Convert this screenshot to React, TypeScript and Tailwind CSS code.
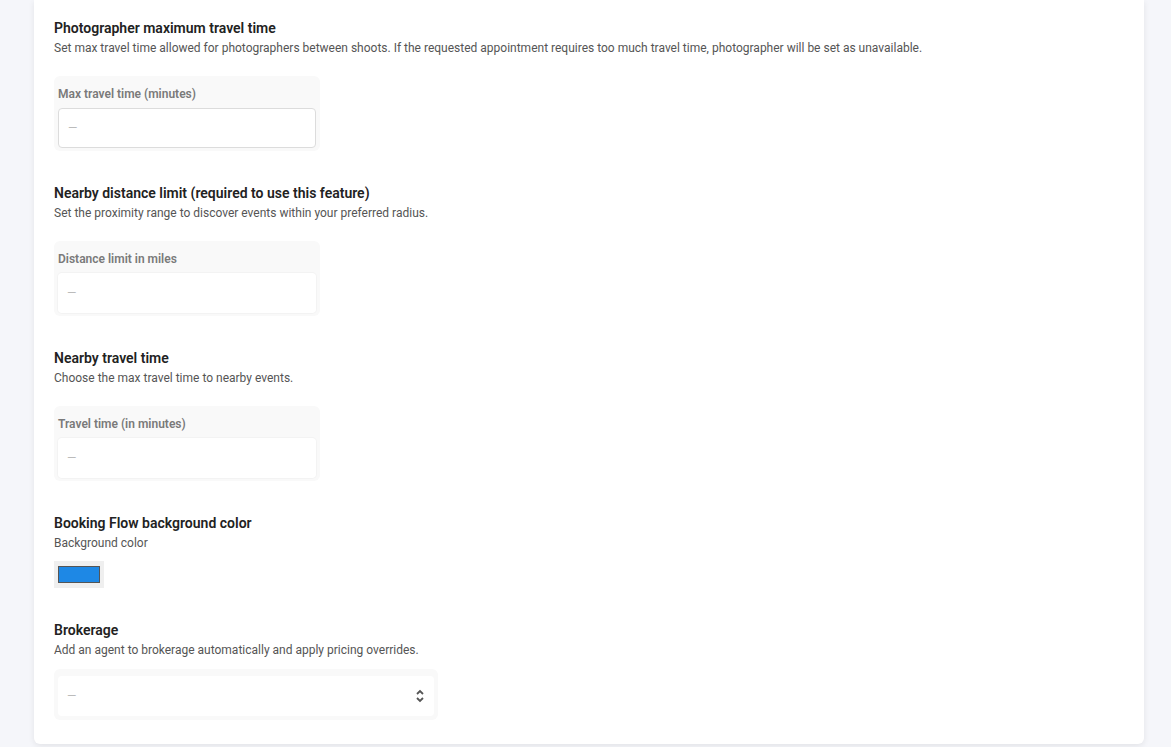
import React from "react";

function Field({ label, bordered }: { label: string; bordered?: boolean }) {
  return (
    <div className="mt-[19px] w-[266px] rounded-md bg-[#f9f9f9] px-[4px] pb-[3px] pt-[9px]">
      <div className="h-[18px] text-[12px] font-semibold leading-[18px] text-[#7a7a7a]">{label}</div>
      <div
        className={
          "mt-[5px] flex h-[40px] items-center rounded-[4px] bg-white px-[9px] text-[12px] text-[#bbb] " +
          (bordered ? "border border-[#dcdcdc]" : "shadow-[0_0_0_1px_#f3f3f3]")
        }
      >
        —
      </div>
    </div>
  );
}

function Head({ title, desc }: { title: string; desc: string }) {
  return (
    <>
      <div className="text-[14px] font-semibold leading-[20px] text-[#222]">{title}</div>
      <div className="mt-[1px] text-[12px] leading-[18px] text-[#555]">{desc}</div>
    </>
  );
}

export default function App() {
  return (
    <div className="min-h-[747px] bg-[#f5f6fa] px-[34px]" style={{ fontFamily: "Roboto, 'Liberation Sans', sans-serif" }}>
      <div className="w-[1110px] rounded-b-md bg-white pl-[20px] pt-[18px] pb-[24px] shadow-[0_2px_6px_rgba(0,0,0,0.08)]">
        <div>
          <Head
            title="Photographer maximum travel time"
            desc="Set max travel time allowed for photographers between shoots. If the requested appointment requires too much travel time, photographer will be set as unavailable."
          />
          <Field label="Max travel time (minutes)" bordered />
        </div>
        <div className="mt-[32px]">
          <Head title="Nearby distance limit (required to use this feature)" desc="Set the proximity range to discover events within your preferred radius." />
          <Field label="Distance limit in miles" />
        </div>
        <div className="mt-[32px]">
          <Head title="Nearby travel time" desc="Choose the max travel time to nearby events." />
          <Field label="Travel time (in minutes)" />
        </div>
        <div className="mt-[32px]">
          <Head title="Booking Flow background color" desc="Background color" />
          <div className="mt-[9px] flex h-[27px] w-[50px] items-center justify-center bg-[#efefef]">
            <div className="h-[17px] w-[42px] border border-[#555] bg-[#1e88e5]" />
          </div>
        </div>
        <div className="mt-[32px]">
          <Head title="Brokerage" desc="Add an agent to brokerage automatically and apply pricing overrides." />
          <div className="mt-[10px] w-[384px] rounded-md bg-[#f9f9f9] p-[4px] pt-[7px]">
            <div className="flex h-[40px] items-center justify-between rounded-[4px] bg-white px-[9px] text-[12px] text-[#bbb]">
              <span>—</span>
              <svg width="10" height="14" viewBox="0 0 10 14" fill="none" stroke="#555" strokeWidth="1.8">
                <path d="M2 5l3-3 3 3M2 9l3 3 3-3" />
              </svg>
            </div>
          </div>
        </div>
      </div>
    </div>
  );
}
